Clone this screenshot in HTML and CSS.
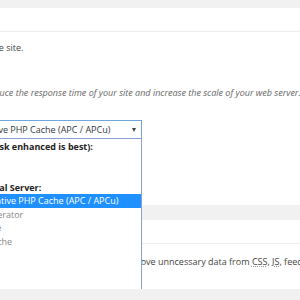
FILE: index.html
```html
<!DOCTYPE html>
<html lang="en">
<head>
    <meta charset="UTF-8">
    <meta name="viewport" content="width=device-width, initial-scale=1.0">
    <title>General Settings</title>
    <link rel="stylesheet" href="styles.css">
</head>
<body>
    <div class="wrap">
        <div class="postbox page-cache">
            <h3 class="hndle">Page Cache</h3>
            <div class="inside">
                <p class="intro">Enable page caching to decrease the response time of the site.</p>
                <div class="form-table">
                    <div class="row">
                        <div class="th">Page Cache:</div>
                        <div class="td">
                            <label class="check"><input type="checkbox" checked> Enable</label>
                            <p class="description">Caching pages will reduce the response time of your site and increase the scale of your web server.</p>
                        </div>
                    </div>
                    <div class="row">
                        <div class="th">Page Cache Method:</div>
                        <div class="td">
                            <div class="select">
                                <span class="select-value">Opcode: Alternative PHP Cache (APC / APCu)</span>
                                <span class="select-arrow"></span>
                                <ul class="dropdown">
                                    <li class="group">Shared Server (disk enhanced is best):</li>
                                    <li>Disk: Basic</li>
                                    <li>Disk: Enhanced</li>
                                    <li class="group">Dedicated / Virtual Server:</li>
                                    <li class="selected">Opcode: Alternative PHP Cache (APC / APCu)</li>
                                    <li class="disabled">Opcode: eAccelerator</li>
                                    <li class="disabled">Opcode: XCache</li>
                                    <li class="disabled">Opcode: WinCache</li>
                                    <li class="group">Multiple Servers:</li>
                                    <li class="disabled">Memcached</li>
                                    <li class="disabled">Redis</li>
                                </ul>
                            </div>
                        </div>
                    </div>
                </div>
            </div>
        </div>
        <div class="postbox minify">
            <h3 class="hndle">Minify</h3>
            <div class="inside">
                <p class="intro">Reduce load time by decreasing the size and number of <abbr title="Cascading Style Sheet">CSS</abbr> and <abbr title="JavaScript">JS</abbr> files. Automatically remove unncessary data from <abbr title="Cascading Style Sheet">CSS</abbr>, <abbr title="JavaScript">JS</abbr>, feed, page and post <abbr title="Hypertext Markup Language">HTML</abbr>.</p>
            </div>
        </div>
    </div>
</body>
</html>
```

FILE: styles.css
```css
body {
    margin: 0;
    background-color: #f1f1f1;
    font-family: "Open Sans", sans-serif;
    font-size: 9px;
    color: #444;
    overflow: hidden;
}
.wrap {
    width: 1100px;
    margin-left: -300px;
    padding-top: 8px;
}
.postbox {
    background: white;
}
.postbox + .postbox {
    margin-top: 15px;
}
.hndle {
    margin: 0;
    height: 23px;
    line-height: 23px;
    padding-left: 9px;
    font-size: 10px;
    font-weight: 600;
    color: #23282d;
    border-bottom: 1px solid #eee;
}
.inside {
    padding: 9px 0 0 62px;
}
.page-cache .inside {
    padding-bottom: 66px;
}
.minify .inside {
    padding-top: 11px;
    padding-bottom: 20px;
}
.intro {
    margin: 0;
    line-height: 14px;
    white-space: nowrap;
}
.form-table {
    margin-top: 8px;
}
.row {
    display: grid;
    grid-template-columns: 149px 1fr;
}
.row + .row {
    margin-top: 20px;
}
.th {
    font-weight: 600;
    line-height: 14px;
    color: #23282d;
}
.check {
    display: flex;
    align-items: center;
    gap: 3px;
    line-height: 14px;
}
.check input {
    margin: 0;
    width: 10px;
    height: 10px;
}
.description {
    margin: 9px 0 0;
    font-style: italic;
    color: #666;
    line-height: 14px;
    white-space: nowrap;
}
.select {
    position: relative;
    width: 228px;
    height: 19px;
    margin-left: 3px;
    box-sizing: border-box;
    border: 1px solid #6fa7dc;
    display: flex;
    align-items: center;
    padding: 0 5px 0 10px;
    color: #32373c;
}
.select-value {
    flex: 1;
    white-space: nowrap;
}
.select-arrow {
    border-left: 2.5px solid transparent;
    border-right: 2.5px solid transparent;
    border-top: 4px solid #444;
}
.dropdown {
    position: absolute;
    top: 100%;
    left: -1px;
    right: -1px;
    margin: 0;
    padding: 1px 0;
    list-style: none;
    background: white;
    border: 1px solid #8aa0d6;
}
.dropdown li {
    height: 13.5px;
    line-height: 13.5px;
    padding-left: 18px;
    color: #222;
    white-space: nowrap;
}
.dropdown .group {
    font-weight: bold;
    padding-left: 8px;
}
.dropdown .selected {
    background-color: #1e90ff;
    color: white;
}
.dropdown .disabled {
    color: #888;
}
abbr {
    text-decoration: underline dotted #999;
}
```
